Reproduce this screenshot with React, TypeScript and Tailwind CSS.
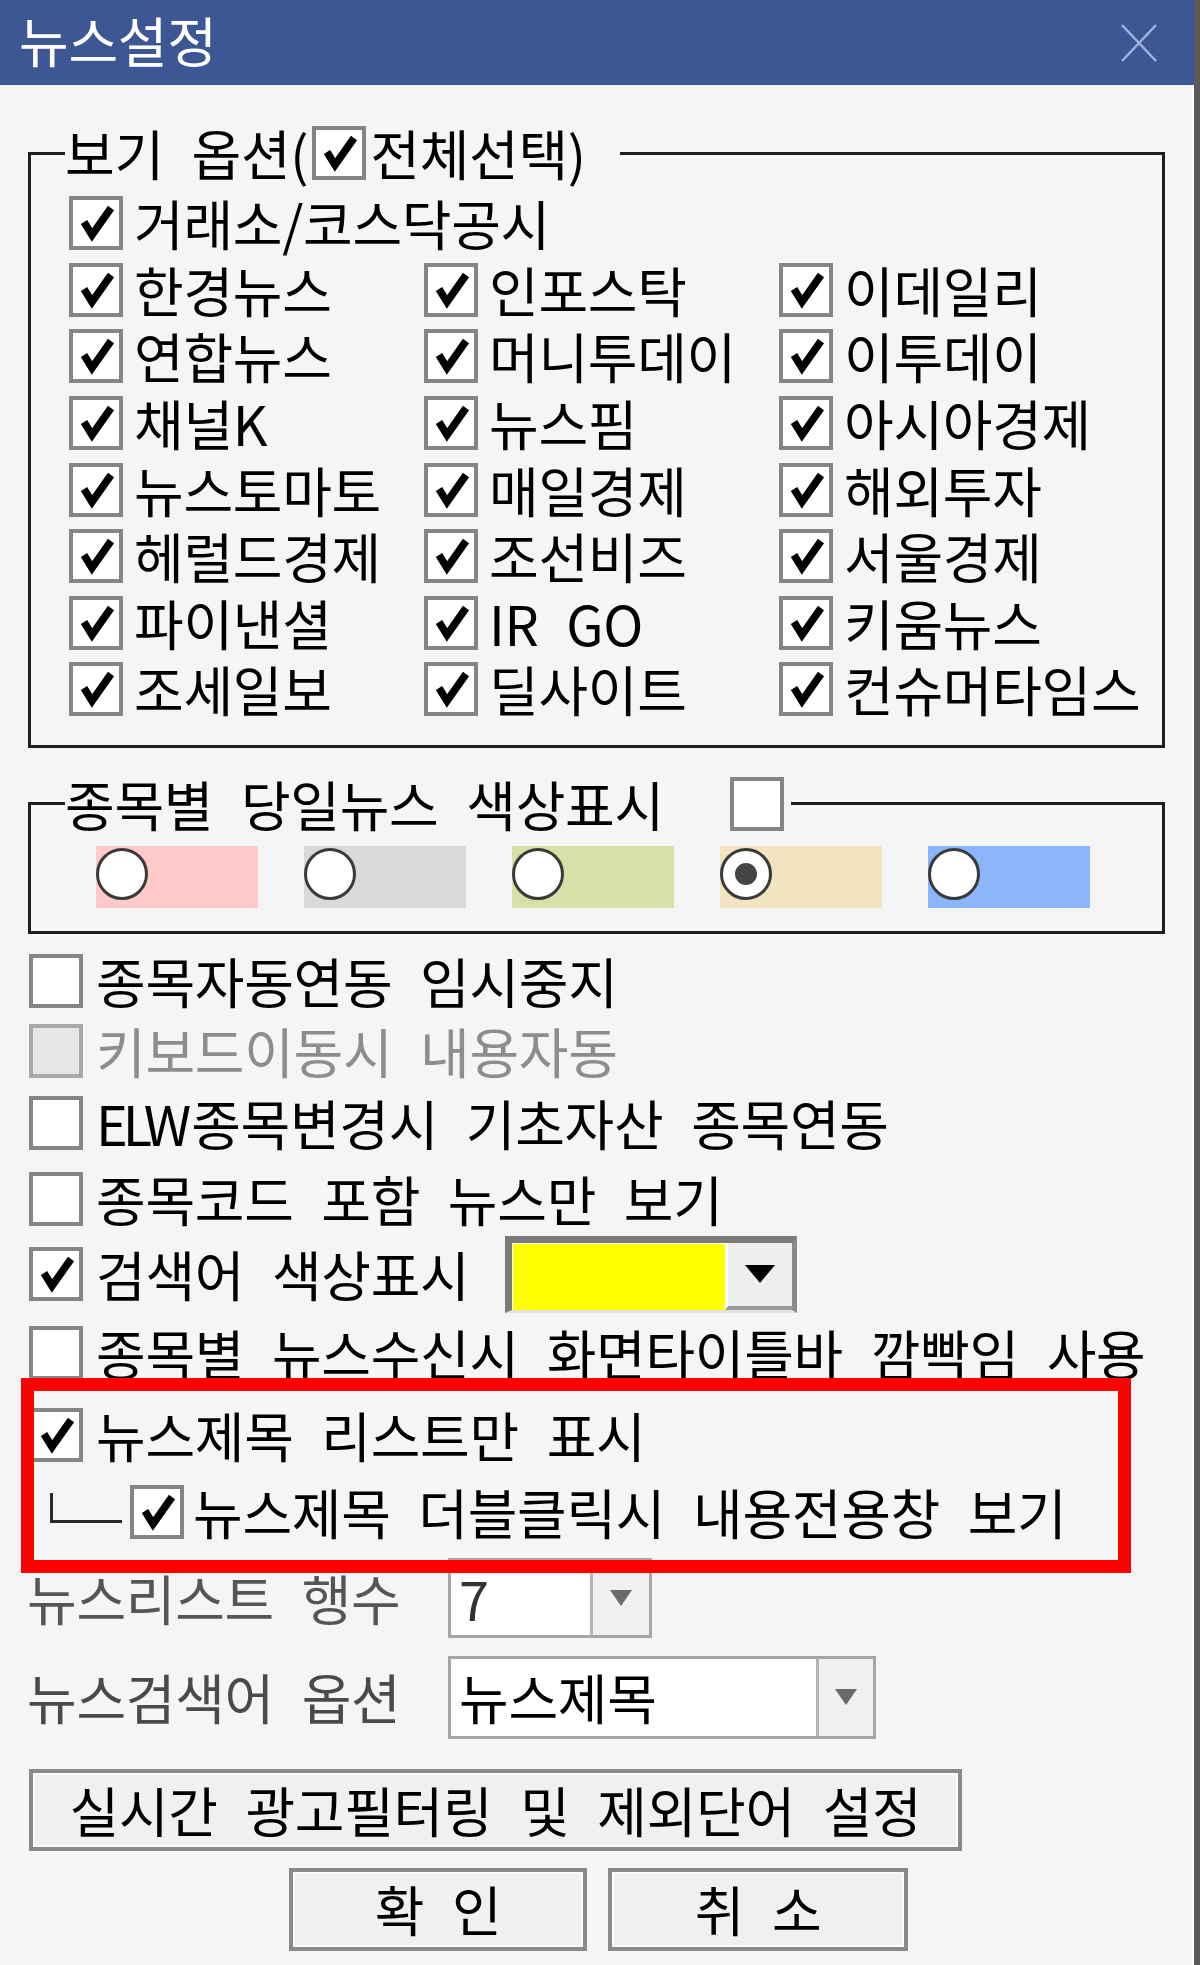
import React from "react";

const T = "text-[54px] leading-none tracking-[-0.3px] [word-spacing:16px] whitespace-nowrap";

function Check({ checked = false, disabled = false }: { checked?: boolean; disabled?: boolean }) {
  return (
    <span
      className={`flex h-[54px] w-[54px] shrink-0 items-center justify-center border-[4px] ${
        disabled ? "border-[#a9a9a9] bg-[#e6e6e6]" : "border-[#858585] bg-white"
      }`}
    >
      {checked && (
        <svg width="46" height="46" viewBox="0 0 46 46">
          <polyline points="11,22 19,35 38,8" fill="none" stroke="#000" strokeWidth="7.5" strokeLinejoin="miter" />
        </svg>
      )}
    </span>
  );
}

function Item({ label, checked = true }: { label: string; checked?: boolean }) {
  return (
    <div className="flex h-[66.6px] items-center gap-[11px]">
      <Check checked={checked} />
      <span className={T}>{label}</span>
    </div>
  );
}

function Radio({ color, selected = false }: { color: string; selected?: boolean }) {
  return (
    <div className={`h-[62px] w-[162px] ${color}`}>
      <div className="mt-[2px] flex h-[52px] w-[52px] items-center justify-center rounded-full border-[3px] border-[#3a3a3a] bg-white">
        {selected && <div className="h-[22px] w-[22px] rounded-full bg-[#444]" />}
      </div>
    </div>
  );
}

function Triangle({ w, h, color }: { w: number; h: number; color: string }) {
  return (
    <svg width={w} height={h} viewBox={`0 0 ${w} ${h}`}>
      <polygon points={`0,0 ${w},0 ${w / 2},${h}`} fill={color} />
    </svg>
  );
}

function Button({ children, className = "" }: { children: React.ReactNode; className?: string }) {
  return (
    <div
      className={`flex items-center justify-center border-[4px] border-[#8a8a8a] bg-[#f0f0f0] shadow-[inset_0_0_0_2px_#fbfbfb] ${className}`}
    >
      <span className={T}>{children}</span>
    </div>
  );
}

export default function App() {
  const rows: [string, string, string][] = [
    ["한경뉴스", "인포스탁", "이데일리"],
    ["연합뉴스", "머니투데이", "이투데이"],
    ["채널K", "뉴스핌", "아시아경제"],
    ["뉴스토마토", "매일경제", "해외투자"],
    ["헤럴드경제", "조선비즈", "서울경제"],
    ["파이낸셜", "IR GO", "키움뉴스"],
    ["조세일보", "딜사이트", "컨슈머타임스"],
  ];

  return (
    <div className="relative h-[1965px] w-[1200px] overflow-hidden border-r-[6px] border-r-[#5a5a5a] bg-[#f5f5f5] font-['Noto_Sans_CJK_KR','Noto_Sans',sans-serif] text-black shadow-[inset_-2px_0_0_#ffffff]">
      {/* Title bar */}
      <div className="flex h-[85px] items-center justify-between bg-[#3c5793] pl-[19px] pr-[37px]">
        <span className={`${T} -mt-[6px] text-white`}>뉴스설정</span>
        <svg width="36" height="38" viewBox="0 0 36 38">
          <line x1="1" y1="1" x2="35" y2="37" stroke="#9fb4de" strokeWidth="2.5" />
          <line x1="35" y1="1" x2="1" y2="37" stroke="#9fb4de" strokeWidth="2.5" />
        </svg>
      </div>

      <div className="flex flex-col">
        {/* Group 1 */}
        <fieldset className="ml-[28px] mt-[41px] w-[1137px] border-[3px] border-[#1e1e1e]">
          <legend className="ml-[34px] flex items-center pr-[34px]">
            <span className={T}>보기 옵션(</span>
            <span className="mx-[4px]">
              <Check checked />
            </span>
            <span className={T}>전체선택)</span>
          </legend>
          <div className="grid grid-cols-[355px_355px_355px] pb-[22px] pl-[38px] pt-[10px]">
            <div className="col-span-3">
              <Item label="거래소/코스닥공시" />
            </div>
            {rows.map((r) => r.map((l) => <Item key={l} label={l} />))}
          </div>
        </fieldset>

        {/* Group 2 */}
        <fieldset className="ml-[28px] mt-[29px] w-[1137px] border-[3px] border-[#1e1e1e]">
          <legend className="ml-[34px] flex items-center pr-[7px]">
            <span className={T}>종목별 당일뉴스 색상표시</span>
            <span className="ml-[66px]">
              <Check />
            </span>
          </legend>
          <div className="flex gap-[46px] pb-[23px] pl-[65px] pt-[15px]">
            <Radio color="bg-[#ffcaca]" />
            <Radio color="bg-[#d9d9d9]" />
            <Radio color="bg-[#d5e1a6]" />
            <Radio color="bg-[#f2e3c1]" selected />
            <Radio color="bg-[#8cb6fb]" />
          </div>
        </fieldset>

        {/* Options */}
        <div className="flex flex-col pl-[29px]">
          <div className="mt-[20px] flex items-center gap-[13px]">
            <Check />
            <span className={T}>종목자동연동 임시중지</span>
          </div>
          <div className="mt-[16px] flex items-center gap-[13px]">
            <Check disabled />
            <span className={`${T} text-[#8d8d8d]`}>키보드이동시 내용자동</span>
          </div>
          <div className="mt-[18px] flex items-center gap-[13px]">
            <Check />
            <span className={T}>
              <span className="tracking-[-5px]">ELW</span>
              <span className="ml-[5px]">종목변경시 기초자산 종목연동</span>
            </span>
          </div>
          <div className="mt-[22px] flex items-center gap-[13px]">
            <Check />
            <span className={T}>종목코드 포함 뉴스만 보기</span>
          </div>
          <div className="mt-[10px] flex items-center gap-[13px]">
            <Check checked />
            <span className={`${T} w-[396px]`}>검색어 색상표시</span>
            <div className="flex h-[77px] w-[292px] border-b-[3px] border-l-[7px] border-r-[5px] border-t-[7px] border-b-[#e2e2e2] border-l-[#7b7b7b] border-r-[#8a8a8a] border-t-[#7b7b7b] bg-white">
              <div className="ml-[1px] mt-[1px] flex-1 bg-[#ffff00]" />
              <div className="flex w-[67px] items-center justify-center border-b-[4px] border-l-[3px] border-b-[#9a9a9a] border-l-white bg-[#efefef]">
                <Triangle w={30} h={18} color="#000" />
              </div>
            </div>
          </div>
          <div className="mt-[13px] flex items-center gap-[13px]">
            <Check />
            <span className={T}>종목별 뉴스수신시 화면타이틀바 깜빡임 사용</span>
          </div>
          <div className="mt-[28px] flex items-center gap-[13px]">
            <Check checked />
            <span className={T}>뉴스제목 리스트만 표시</span>
          </div>
          <div className="mt-[23px] flex items-center">
            <span className="ml-[21px] mt-[-8px] h-[30px] w-[72px] border-b-[3px] border-l-[3px] border-[#2a2a2a]" />
            <span className="ml-[8px]">
              <Check checked />
            </span>
            <span className={`${T} ml-[9px]`}>뉴스제목 더블클릭시 내용전용창 보기</span>
          </div>

          {/* 뉴스리스트 행수 */}
          <div className="-ml-[2px] mt-[19px] flex items-center">
            <span className={`${T} w-[421px] text-[#555555]`}>뉴스리스트 행수</span>
            <div className="flex h-[80px] w-[204px] border-[3px] border-[#a6a6a6] bg-white">
              <span className={`${T} flex flex-1 items-center pl-[8px] text-[#333]`}>7</span>
              <div className="flex w-[59px] items-center justify-center border-l-[3px] border-[#b5b5b5] bg-[#f0f0f0]">
                <Triangle w={22} h={16} color="#6a6a6a" />
              </div>
            </div>
          </div>

          {/* 뉴스검색어 옵션 */}
          <div className="-ml-[2px] mt-[18px] flex items-center">
            <span className={`${T} w-[421px] text-[#4a4a4a]`}>뉴스검색어 옵션</span>
            <div className="flex h-[83px] w-[428px] border-[3px] border-[#a6a6a6] bg-white">
              <span className={`${T} flex flex-1 items-center pl-[8px]`}>뉴스제목</span>
              <div className="flex w-[57px] items-center justify-center border-l-[3px] border-[#b5b5b5] bg-[#f0f0f0]">
                <Triangle w={22} h={16} color="#6a6a6a" />
              </div>
            </div>
          </div>

          <Button className="mt-[30px] h-[82px] w-[933px]">실시간 광고필터링 및 제외단어 설정</Button>

          <div className="ml-[260px] mt-[17px] flex gap-[21px]">
            <Button className="h-[83px] w-[298px]">확 인</Button>
            <Button className="h-[83px] w-[300px]">취 소</Button>
          </div>
        </div>
      </div>

      {/* red annotation box */}
      <div className="pointer-events-none absolute left-[21px] top-[1378px] h-[195px] w-[1110px] border-[13px] border-[#ff0000]" />
    </div>
  );
}
